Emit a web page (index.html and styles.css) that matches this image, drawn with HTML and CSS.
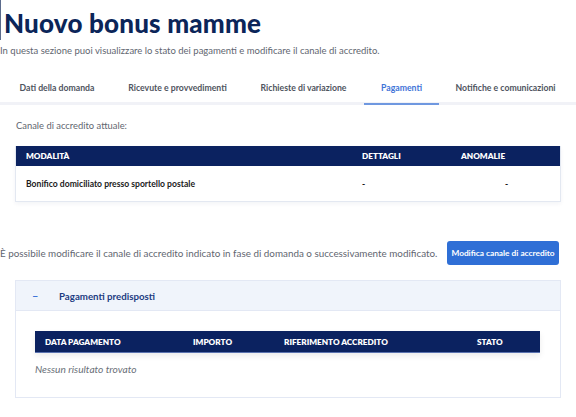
FILE: index.html
```html
<!DOCTYPE html>
<html lang="it">
<head>
<meta charset="utf-8">
<link rel="stylesheet" href="styles.css">
</head>
<body>
<header class="page-head">
  <h1 class="title">Nuovo bonus mamme</h1>
  <p class="subtitle">In questa sezione puoi visualizzare lo stato dei pagamenti e modificare il canale di accredito.</p>
</header>
<nav class="tabs">
  <a class="tab">Dati della domanda</a>
  <a class="tab">Ricevute e provvedimenti</a>
  <a class="tab">Richieste di variazione</a>
  <a class="tab active">Pagamenti</a>
  <a class="tab">Notifiche e comunicazioni</a>
</nav>
<section class="content">
  <p class="label">Canale di accredito attuale:</p>
  <div class="card">
    <div class="thead grid-1">
      <span>MODALITÀ</span><span>DETTAGLI</span><span>ANOMALIE</span>
    </div>
    <div class="trow grid-1">
      <span>Bonifico domiciliato presso sportello postale</span><span>-</span><span class="dash-r">-</span>
    </div>
  </div>
</section>
<div class="change">
  <p class="change-text">È possibile modificare il canale di accredito indicato in fase di domanda o successivamente modificato.</p>
  <button class="btn">Modifica canale di accredito</button>
</div>
<section class="accordion">
  <div class="acc-head"><span class="minus">–</span><span class="acc-title">Pagamenti predisposti</span></div>
  <div class="acc-body">
    <div class="thead grid-2">
      <span>DATA PAGAMENTO</span><span>IMPORTO</span><span>RIFERIMENTO ACCREDITO</span><span>STATO</span>
    </div>
    <p class="empty">Nessun risultato trovato</p>
  </div>
</section>
</body>
</html>
```
FILE: styles.css
```css
* { box-sizing: border-box; }
body {
  margin: 0;
  font-family: "Lato", "Open Sans", sans-serif;
  color: #1a1a1a;
  background: #fff;
  white-space: nowrap;
}
.title {
  margin: 0;
  padding: 7px 0 0 3px;
  font-size: 26px;
  line-height: 33px;
  font-weight: 900;
  color: #0b2559;
  border-left: 1px solid #5b6b8c;
  width: max-content;
  letter-spacing: 0.2px;
}
.subtitle {
  margin: 4px 0 0;
  font-size: 9.5px;
  line-height: 14px;
  color: #5f6670;
}
.tabs {
  display: grid;
  grid-template-columns: 110px 131px 121px 75px 133px;
  margin-top: 17px;
  padding-left: 2px;
  border-bottom: 3px solid #f1f2f7;
  height: 30px;
}
.tab {
  padding-top: 7px;
  text-align: center;
  font-size: 8.7px;
  font-weight: 700;
  color: #4f5460;
}
.tab.active {
  color: #3f74d8;
  border-bottom: 2px solid #6f98e0;
  margin-bottom: -3px;
}
.content {
  padding: 15px 15px 0;
}
.label {
  margin: 0 0 15px 1px;
  font-size: 9.4px;
  color: #5f6670;
}
.card {
  border: 1px solid #e3e8f1;
  border-top: 0;
  box-shadow: 0 2px 4px rgba(20, 40, 90, 0.05);
}
.thead {
  background: #0b2260;
  color: #fff;
  font-size: 8.2px;
  font-weight: 800;
  height: 20px;
  align-items: center;
}
.grid-1 {
  display: grid;
  grid-template-columns: 336px 99px 1fr;
  padding-left: 10px;
}
.trow {
  height: 35px;
  align-items: center;
  font-size: 8.6px;
  font-weight: 700;
  color: #1b1b1b;
}
.dash-r { padding-left: 44px; }
.change {
  display: flex;
  align-items: center;
  justify-content: space-between;
  padding: 39px 17px 0 0;
}
.change-text {
  margin: 0;
  font-size: 9.85px;
  color: #5f6670;
}
.btn {
  background: #2f6fd6;
  color: #fff;
  border: 0;
  border-radius: 3px;
  font-family: inherit;
  font-size: 8.3px;
  font-weight: 700;
  height: 24px;
  width: 112px;
  padding: 0;
}
.accordion {
  margin: 15px 15px 0;
  border: 1px solid #e3e8f4;
}
.acc-head {
  background: #f0f4fb;
  height: 30px;
  display: flex;
  align-items: center;
  border-bottom: 1px solid #e3e8f4;
}
.minus {
  width: 43px;
  padding-left: 16px;
  color: #3f74d8;
  font-weight: 700;
  font-size: 11px;
}
.acc-title {
  font-size: 9.7px;
  font-weight: 700;
  color: #1d3c82;
}
.acc-body {
  padding: 20px 20px 20px 19px;
  height: 86px;
}
.grid-2 {
  display: grid;
  grid-template-columns: 148px 91px 193px 1fr;
  padding-left: 10px;
  height: 22px;
  box-shadow: 0 3px 6px rgba(0,0,0,0.08);
  border-bottom: 1px solid #5b73b0;
}
.empty {
  margin: 10px 0 0;
  font-size: 10.2px;
  font-style: italic;
  color: #6a6f78;
}
```
